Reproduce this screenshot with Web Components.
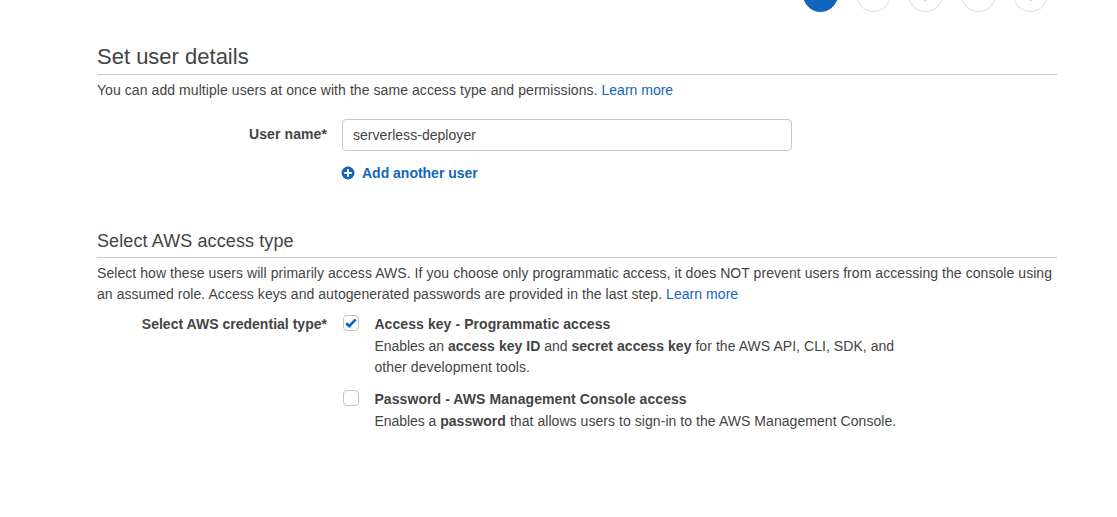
<!DOCTYPE html>
<html lang="en">
<head>
<meta charset="utf-8">
<title>Add user</title>
<style>
body{margin:0;background:#fff;color:#444;font:14px/21px "Liberation Sans",Arial,sans-serif;overflow:hidden}
</style>
</head>
<body>
<user-wizard></user-wizard>
<script>
const define = (name, html, setup) => customElements.define(name, class extends HTMLElement {
  constructor() {
    super();
    this.attachShadow({ mode: 'open' }).innerHTML = html;
  }
  connectedCallback() { if (setup) setup(this, this.shadowRoot); }
});

define('wizard-step', `<style>
:host{display:block;flex:none;width:35px;height:35px}
svg{display:block}
circle{fill:#fff;stroke:#ddd}
path{display:none;stroke:#ccc}
:host([active]) circle{fill:#1166bb;stroke:#1166bb}
:host([marked]) path{display:block}
</style><svg width="35" height="35"><circle cx="17.5" cy="17.5" r="17"/><path d="M16.5 23.5h2"/></svg>`);

define('page-section', `<style>
:host{display:block}
h1,h2{margin:0;font-weight:400;border-bottom:1px solid #c8c8c8;white-space:nowrap}
h1{font-size:22px;line-height:34px;height:34px}
h2{font-size:18px;line-height:32px;height:32px;letter-spacing:.1px}
</style><div id="head"></div><slot></slot>`, (el, root) => {
  const h = document.createElement('h' + el.getAttribute('level'));
  h.textContent = el.getAttribute('heading');
  root.getElementById('head').replaceChildren(h);
});

define('text-link', `<style>:host{display:inline;color:#1166bb}</style><slot></slot>`);

define('form-row', `<style>
:host{display:grid;grid-template-columns:230px 1fr;column-gap:15px}
label{text-align:right;font-weight:700;padding-top:var(--label-top,0);letter-spacing:var(--label-spacing,0);white-space:nowrap}
</style><label><slot name="label"></slot></label><div><slot></slot></div>`);

define('text-field', `<style>
:host{display:block;box-sizing:border-box;width:450px;height:32px;border:1px solid #c8c8c8;border-radius:4px;padding:5px 10px;letter-spacing:.04px}
</style><slot></slot>`);

define('add-link', `<style>
:host{display:flex;align-items:center;gap:7px;color:#1166bb;font-weight:700;height:21px;letter-spacing:-.01px}
svg{display:block;width:14px;height:14px;margin:0 0 2px -1px}
</style><svg viewBox="0 0 14 14"><circle cx="7" cy="7" r="6.5" fill="#1166bb"/><path d="M7 3.2v7.6M3.2 7h7.6" stroke="#fff" stroke-width="2"/></svg><slot></slot>`);

define('check-option', `<style>
:host{display:grid;grid-template-columns:16px 1fr;column-gap:15.4px;padding-left:1px}
.box{box-sizing:border-box;width:16px;height:16px;border:1px solid #c4c4c4;border-radius:4px;margin-top:1px}
svg{display:none;width:14px;height:14px}
:host([checked]) svg{display:block}
.title{font-weight:700;line-height:20px;height:22px;letter-spacing:.08px}
</style><div class="box"><svg viewBox="0 0 14 14"><path d="M2.2 7.2 5.3 10.1 11.7 3.4" fill="none" stroke="#1166bb" stroke-width="2.7"/></svg></div>
<div><div class="title"><slot name="title"></slot></div><slot></slot></div>`);

define('user-wizard', `<style>
:host{display:block;height:517px;overflow:hidden}
nav{display:flex;gap:17.5px;padding-left:803px;height:35px;margin-top:-23px}
main{width:960px;margin-left:97px;padding-top:28px}
p{margin:0;white-space:nowrap}
.intro{padding-top:5px}
.name{padding-top:18px;--label-top:5px;--label-spacing:.1px}
.cred{padding-top:9px;--label-spacing:.02px}
add-link{margin-top:12px}
.access{margin-top:41px}
check-option + check-option{margin-top:11px}
.a{letter-spacing:.07px}
.a text-link{letter-spacing:0}
.b{letter-spacing:.06px}
.c{letter-spacing:.055px}
.tight{letter-spacing:-.04px}
.d,.f{letter-spacing:.055px}
.e{letter-spacing:.1px}
</style>
<nav><wizard-step active></wizard-step><wizard-step></wizard-step><wizard-step marked></wizard-step><wizard-step></wizard-step><wizard-step marked></wizard-step></nav>
<main>
<page-section level="1" heading="Set user details">
<p class="intro"><span class="a">You can add multiple users at once with the same access type and permissions. <text-link>Learn more</text-link></span></p>
<form-row class="name"><span slot="label">User name*</span><text-field>serverless-deployer</text-field><add-link>Add another user</add-link></form-row>
</page-section>
<page-section class="access" level="2" heading="Select AWS access type">
<p class="intro"><span class="b">Select how these users will primarily access AWS. If you choose only programmatic access, it does NOT prevent users from accessing the console using</span><br><span class="c">an assumed role. Access keys and autogenerated passwords are provided in the last step. <text-link>Learn more</text-link></span></p>
<form-row class="cred"><span slot="label">Select AWS credential type*</span>
<check-option checked><span slot="title">Access key - Programmatic access</span><p><span class="d"><span class="tight">Enables an </span><b>access key ID</b><span class="tight"> and </span><b>secret access key</b> for the AWS API, CLI, SDK, and</span><br><span class="e">other development tools.</span></p></check-option>
<check-option><span slot="title">Password - AWS Management Console access</span><p><span class="f"><span class="tight">Enables a </span><b>password</b> that allows users to sign-in to the AWS Management Console.</span></p></check-option>
</form-row>
</page-section>
</main>`);
</script>
</body>
</html>
